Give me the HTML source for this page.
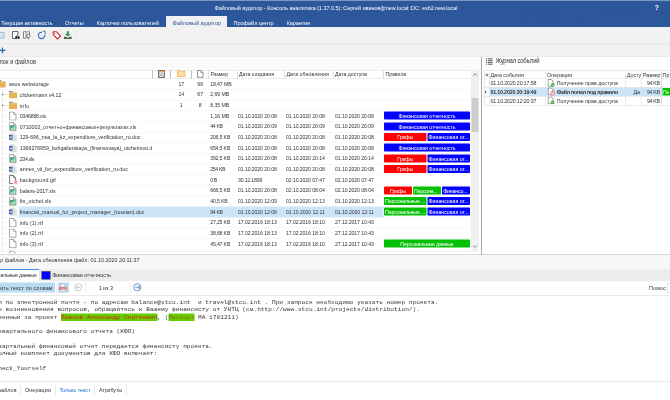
<!DOCTYPE html>
<html lang="ru"><head><meta charset="utf-8"><title>Файловый аудитор</title>
<style>
html,body{margin:0;padding:0;}
body{width:670px;height:400px;overflow:hidden;background:#fff;position:relative;font-family:"Liberation Sans",sans-serif;}
#app{position:absolute;left:0;top:0;width:1340px;height:800px;overflow:hidden;transform:scale(0.5);filter:blur(0.1px);transform-origin:0 0;}
#app div,#app span,#app svg{position:absolute;display:block;}
#app span{white-space:pre;}
</style></head><body><div id="app" style="position:absolute">
<div style="left:0px;top:0px;width:1340px;height:54px;background:rgba(41,85,153,0.99);"></div>
<div style="left:0px;top:0px;width:1340px;height:1.6px;background:rgba(126,152,197,0.99);"></div>
<svg style="left:1000px;top:1.6px" width="340" height="52.4" viewBox="0 0 170 26.2"><path d="M44.0 19.0 L38.5 28.5 L27.5 28.5 L22.0 19.0 L27.5 9.5 L38.5 9.5Z M61.6 14.0 L58.1 20.1 L51.1 20.1 L47.6 14.0 L51.1 7.9 L58.1 7.9Z M111.6 9.6 L109.1 13.9 L104.1 13.9 L101.6 9.6 L104.1 5.3 L109.1 5.3Z M136.0 6.3 L131.5 14.1 L122.5 14.1 L118.0 6.3 L122.5 -1.5 L131.5 -1.5Z M85.0 24.0 L82.5 28.3 L77.5 28.3 L75.0 24.0 L77.5 19.7 L82.5 19.7Z M53.0 4.0 L50.5 8.3 L45.5 8.3 L43.0 4.0 L45.5 -0.3 L50.5 -0.3Z" fill="none" stroke="#23498a" stroke-width="0.5" opacity="0.5"/></svg>
<span style="left:1309.32px;top:5.4px;font-size:14px;line-height:19.6px;color:#fff;font-weight:bold;transform:scaleY(1.12);">?</span>
<span style="left:429.4px;top:9.04px;font-size:10.8px;line-height:15.12px;color:#fff;letter-spacing:0.01px;transform:scaleY(1.12);">Файловый аудитор - Консоль аналитика (1.37.0.5)::Сергей иванов@new.local::DC: esb2.new.local</span>
<div style="left:332px;top:32px;width:122px;height:23px;background:rgba(243,243,243,0.99);"></div>
<span style="left:2.4px;top:37.7px;font-size:11px;line-height:15.4px;color:#fff;letter-spacing:-0.04px;transform:scaleY(1.12);">Текущая активность</span>
<span style="left:130px;top:37.7px;font-size:11px;line-height:15.4px;color:#fff;letter-spacing:-0.1px;transform:scaleY(1.12);">Отчеты</span>
<span style="left:193.4px;top:37.7px;font-size:11px;line-height:15.4px;color:#fff;letter-spacing:0px;transform:scaleY(1.12);">Карточки пользователей</span>
<span style="left:467px;top:37.7px;font-size:11px;line-height:15.4px;color:#fff;letter-spacing:-0.03px;transform:scaleY(1.12);">Профайл центр</span>
<span style="left:573.4px;top:37.7px;font-size:11px;line-height:15.4px;color:#fff;letter-spacing:-0.19px;transform:scaleY(1.12);">Карантин</span>
<span style="left:345px;top:37.7px;font-size:11px;line-height:15.4px;color:#34508a;letter-spacing:-0px;transform:scaleY(1.12);">Файловый аудитор</span>
<div style="left:0px;top:54px;width:1340px;height:33px;background:rgba(242,242,242,0.99);"></div>
<div style="left:0px;top:86.4px;width:1340px;height:1.2px;background:rgba(230,230,230,0.99);"></div>
<div style="left:0px;top:87.6px;width:1340px;height:25.4px;background:rgba(241,241,241,0.99);"></div>
<div style="left:0px;top:112.6px;width:1340px;height:1px;background:rgba(220,220,220,0.99);"></div>
<div style="left:16px;top:60px;width:1.2px;height:21px;background:rgba(226,226,226,0.99);"></div>
<div style="left:67px;top:60px;width:1.2px;height:21px;background:rgba(226,226,226,0.99);"></div>
<div style="left:98px;top:60px;width:1.2px;height:21px;background:rgba(226,226,226,0.99);"></div>
<div style="left:152px;top:60px;width:1.2px;height:21px;background:rgba(226,226,226,0.99);"></div>
<svg style="left:0px;top:62px" width="10" height="16" viewBox="0 0 5 8"><rect x="-3" y="1.5" width="7" height="5.5" fill="#dbe9f5" stroke="#7aa7d0" stroke-width="0.7"/></svg>
<svg style="left:22px;top:61px" width="20" height="20" viewBox="0 0 10 10"><path d="M1.5 1h5.5v3.5h-1v3.5h-4.5z" fill="#fff" stroke="#444" stroke-width="0.8"/><rect x="4.2" y="5.6" width="2" height="3" rx="0.8" fill="#333"/><rect x="6.6" y="5.6" width="2" height="3" rx="0.8" fill="#333"/></svg>
<svg style="left:44px;top:61px" width="20" height="20" viewBox="0 0 10 10"><path d="M1.5 1.2h2.5v6.5h-2.5z M5 1.2h2.5v3" fill="#fff" stroke="#555" stroke-width="0.7"/><circle cx="6.3" cy="5.3" r="1.7" fill="#fff" stroke="#444" stroke-width="0.7"/><path d="M6.3 7v1.8" stroke="#444" stroke-width="0.8"/></svg>
<svg style="left:73px;top:60px" width="20" height="20" viewBox="0 0 10 10"><path d="M5.4 2.25A3.2 3.2 0 1 0 8.2 4.9" fill="none" stroke="#2b6cb8" stroke-width="1.1"/><path d="M6 1.2h2.7v3.2" fill="none" stroke="#2b6cb8" stroke-width="0.9"/></svg>
<svg style="left:104px;top:61px" width="20" height="20" viewBox="0 0 10 10"><path d="M1.2 1.2h3l4.3 4.3-3 3-4.3-4.3z" fill="#fff" stroke="#d03020" stroke-width="1.1" stroke-linejoin="round"/><circle cx="2.8" cy="2.8" r="0.6" fill="#d03020"/></svg>
<svg style="left:126px;top:61px" width="20" height="20" viewBox="0 0 10 10"><path d="M3.7 0.8h2.2v2.6h1.7l-2.8 2.8-2.8-2.8h1.7z" fill="#2e9d57"/><path d="M1 6.3h2l1 1h1.6l1-1h2v2.2h-7.6z" fill="#555"/></svg>
<svg style="left:0px;top:92px" width="12" height="16" viewBox="0 0 6 8"><path d="M-0.5 4.3h5.9M2.5 1.4v5.8" stroke="#2b6cb8" stroke-width="1.25" fill="none"/></svg>
<div style="left:0px;top:113.6px;width:962.6px;height:26px;background:rgba(250,250,250,0.99);"></div>
<span style="left:-0.6px;top:115.96px;font-size:11.2px;line-height:15.68px;color:#333;letter-spacing:0.2px;transform:scaleY(1.12);">пок и файлов</span>
<div style="left:963.6px;top:113.6px;width:376.4px;height:396px;background:rgba(255,255,255,0.99);"></div>
<div style="left:962.4px;top:113.6px;width:1.2px;height:396px;background:rgba(167,167,167,0.99);"></div>
<div style="left:0px;top:139.6px;width:958px;height:1.2px;background:rgba(213,213,213,0.99);"></div>
<div style="left:0px;top:156.8px;width:942px;height:1.2px;background:rgba(217,217,217,0.99);"></div>
<div style="left:304.4px;top:140.8px;width:1.2px;height:16px;background:rgba(188,188,188,0.99);"></div>
<div style="left:340.4px;top:140.8px;width:1.2px;height:16px;background:rgba(188,188,188,0.99);"></div>
<div style="left:382.4px;top:140.8px;width:1.2px;height:16px;background:rgba(188,188,188,0.99);"></div>
<div style="left:417.2px;top:140.8px;width:1.2px;height:16px;background:rgba(188,188,188,0.99);"></div>
<div style="left:474px;top:140.8px;width:1.2px;height:16px;background:rgba(188,188,188,0.99);"></div>
<div style="left:569.2px;top:140.8px;width:1.2px;height:16px;background:rgba(188,188,188,0.99);"></div>
<div style="left:667.2px;top:140.8px;width:1.2px;height:16px;background:rgba(188,188,188,0.99);"></div>
<div style="left:767.2px;top:140.8px;width:1.2px;height:16px;background:rgba(188,188,188,0.99);"></div>
<span style="left:421px;top:142.12px;font-size:10.4px;line-height:14.56px;color:#333;letter-spacing:-0.12px;transform:scaleY(1.12);">Размер</span>
<span style="left:478px;top:142.12px;font-size:10.4px;line-height:14.56px;color:#333;letter-spacing:-0.04px;transform:scaleY(1.12);">Дата создания</span>
<span style="left:572.8px;top:142.12px;font-size:10.4px;line-height:14.56px;color:#333;letter-spacing:0.11px;transform:scaleY(1.12);">Дата обновления</span>
<span style="left:670px;top:142.12px;font-size:10.4px;line-height:14.56px;color:#333;letter-spacing:-0.04px;transform:scaleY(1.12);">Дата доступа</span>
<span style="left:771.2px;top:142.12px;font-size:10.4px;line-height:14.56px;color:#333;letter-spacing:-0.2px;transform:scaleY(1.12);">Правила</span>
<svg style="left:316.4px;top:140.4px" width="14.4" height="16" viewBox="0 0 7.2 8"><rect x="0.5" y="0.5" width="6" height="7" fill="#fff" stroke="#555" stroke-width="0.8"/><rect x="0.9" y="0.9" width="5.2" height="1.4" fill="#eea060"/><path d="M1.6 3.2l3.6 3.6M5.2 3.2l-3.6 3.6" stroke="#666" stroke-width="0.6"/><rect x="1.4" y="3" width="4.2" height="4" fill="none" stroke="#888" stroke-width="0.4"/></svg>
<svg style="left:353.6px;top:140.4px" width="17.2" height="14.4" viewBox="0 0 8.6 7.2"><path d="M0.5 0.6h3.2l0.8 1h3.6v5h-7.6z" fill="#fbdf9e" stroke="#f5a94e" stroke-width="0.8"/></svg>
<svg style="left:394.4px;top:140.4px" width="13.2" height="15.6" viewBox="0 0 6.6 7.8"><path d="M0.5 0.5h3.4l2.2 2.2v4.6h-5.6z" fill="#fff" stroke="#666" stroke-width="0.7"/><path d="M3.9 0.5v2.2h2.2" fill="none" stroke="#666" stroke-width="0.6"/></svg>
<svg style="left:-4.8px;top:160.35px" width="16.8" height="15.6" viewBox="0 0 8.4 7.8"><rect x="0" y="0.2" width="3.6" height="1.3" fill="#6a6a6a"/><rect x="0" y="1.1" width="8.2" height="1.2" fill="#dcc8a0"/><rect x="0" y="1.9" width="8.2" height="5.6" fill="#e9b259"/></svg>
<span style="left:18px;top:160.93px;font-size:10.6px;line-height:14.84px;color:#333;letter-spacing:-0.01px;transform:scaleY(1.12);">asus webstorage</span>
<span style="left:356.82px;top:161.07px;font-size:10.4px;line-height:14.56px;color:#333;transform:scaleY(1.12);">17</span>
<span style="left:394.62px;top:161.07px;font-size:10.4px;line-height:14.56px;color:#333;transform:scaleY(1.12);">96</span>
<span style="left:420.4px;top:161.07px;font-size:10.4px;line-height:14.56px;color:#333;letter-spacing:-0.24px;transform:scaleY(1.12);">18,47 MB</span>
<div style="left:0px;top:178.4px;width:942px;height:1px;background:rgba(241,241,241,0.99);"></div>
<svg style="left:18px;top:181.65px" width="16.8" height="15.6" viewBox="0 0 8.4 7.8"><rect x="0" y="0.2" width="3.6" height="1.3" fill="#6a6a6a"/><rect x="0" y="1.1" width="8.2" height="1.2" fill="#dcc8a0"/><rect x="0" y="1.9" width="8.2" height="5.6" fill="#e9b259"/></svg>
<svg style="left:3.2px;top:185.45px" width="6" height="8" viewBox="0 0 3 4"><path d="M0.6 0.6l1.5 1.4-1.5 1.4z" fill="#444"/></svg>
<div style="left:7.4px;top:189.05px;width:9.2px;height:0.9px;background:rgba(218,218,218,0.99);"></div>
<span style="left:39.6px;top:182.23px;font-size:10.6px;line-height:14.84px;color:#333;letter-spacing:-0.14px;transform:scaleY(1.12);">clickermann v4.12</span>
<span style="left:356.82px;top:182.37px;font-size:10.4px;line-height:14.56px;color:#333;transform:scaleY(1.12);">14</span>
<span style="left:394.62px;top:182.37px;font-size:10.4px;line-height:14.56px;color:#333;transform:scaleY(1.12);">67</span>
<span style="left:420.4px;top:182.37px;font-size:10.4px;line-height:14.56px;color:#333;letter-spacing:-0.1px;transform:scaleY(1.12);">2,69 MB</span>
<div style="left:0px;top:199.7px;width:942px;height:1px;background:rgba(241,241,241,0.99);"></div>
<svg style="left:18px;top:202.95px" width="16.8" height="15.6" viewBox="0 0 8.4 7.8"><rect x="0" y="0.2" width="3.6" height="1.3" fill="#6a6a6a"/><rect x="0" y="1.1" width="8.2" height="1.2" fill="#dcc8a0"/><rect x="0" y="1.9" width="8.2" height="5.6" fill="#e9b259"/></svg>
<svg style="left:3.2px;top:206.75px" width="6" height="8" viewBox="0 0 3 4"><path d="M0.6 0.6l1.5 1.4-1.5 1.4z" fill="#444"/></svg>
<div style="left:7.4px;top:210.35px;width:9.2px;height:0.9px;background:rgba(218,218,218,0.99);"></div>
<span style="left:39.6px;top:203.53px;font-size:10.6px;line-height:14.84px;color:#333;letter-spacing:0.53px;transform:scaleY(1.12);">info</span>
<span style="left:359.71px;top:203.67px;font-size:10.4px;line-height:14.56px;color:#333;transform:scaleY(1.12);">1</span>
<span style="left:397.51px;top:203.67px;font-size:10.4px;line-height:14.56px;color:#333;transform:scaleY(1.12);">8</span>
<span style="left:420.4px;top:203.67px;font-size:10.4px;line-height:14.56px;color:#333;letter-spacing:-0.1px;transform:scaleY(1.12);">8,35 MB</span>
<div style="left:0px;top:221px;width:942px;height:1px;background:rgba(241,241,241,0.99);"></div>
<svg style="left:18.2px;top:222.65px" width="18" height="18.8" viewBox="0 0 9 9.4"><path d="M0.6 0.5h4l2.4 2.4v5.8h-6.4z" fill="#fff" stroke="#7a7a7a" stroke-width="0.65"/><path d="M4.6 0.5v2.4h2.4" fill="none" stroke="#7a7a7a" stroke-width="0.55"/></svg>
<div style="left:5.4px;top:231.65px;width:10.4px;height:0.9px;background:rgba(228,228,228,0.99);"></div>
<span style="left:39.6px;top:224.83px;font-size:10.6px;line-height:14.84px;color:#333;letter-spacing:-0.45px;transform:scaleY(1.12);">0346868.xls</span>
<span style="left:420.4px;top:224.97px;font-size:10.4px;line-height:14.56px;color:#333;letter-spacing:-0.1px;transform:scaleY(1.12);">1,16 MB</span>
<span style="left:476px;top:224.97px;font-size:10.4px;line-height:14.56px;color:#333;letter-spacing:-0.22px;transform:scaleY(1.12);">01.10.2020 20:08</span>
<span style="left:572px;top:224.97px;font-size:10.4px;line-height:14.56px;color:#333;letter-spacing:-0.22px;transform:scaleY(1.12);">01.10.2020 20:08</span>
<span style="left:670px;top:224.97px;font-size:10.4px;line-height:14.56px;color:#333;letter-spacing:-0.22px;transform:scaleY(1.12);">01.10.2020 20:08</span>
<div style="left:768px;top:223.4px;width:172px;height:16px;background:rgba(0,0,255,0.99);border-radius:1.6px;"></div>
<span style="left:797px;top:224.58px;font-size:10.6px;line-height:14.84px;color:#fff;letter-spacing:-0.14px;transform:scaleY(1.12);">Финансовая отчетность</span>
<div style="left:0px;top:242.3px;width:942px;height:1px;background:rgba(241,241,241,0.99);"></div>
<svg style="left:18.2px;top:243.95px" width="18" height="18.8" viewBox="0 0 9 9.4"><path d="M0.6 0.5h4l2.4 2.4v5.8h-6.4z" fill="#fff" stroke="#7a7a7a" stroke-width="0.65"/><path d="M4.6 0.5v2.4h2.4" fill="none" stroke="#7a7a7a" stroke-width="0.55"/><rect x="0.9" y="3.4" width="5.8" height="5" fill="#62b184"/><path d="M1.2 3.9l1.3 1.2 1.8-2.3" stroke="#2a8a52" stroke-width="0.8" fill="none"/><path d="M2.2 8v-1.6M3.8 8v-2.4M5.4 8v-3.4" stroke="#eaf6ee" stroke-width="0.9"/></svg>
<div style="left:5.4px;top:252.95px;width:10.4px;height:0.9px;background:rgba(228,228,228,0.99);"></div>
<span style="left:39.6px;top:246.13px;font-size:10.6px;line-height:14.84px;color:#333;letter-spacing:-0.03px;transform:scaleY(1.12);">0710002_отчет+о+финансовых+результатах.xls</span>
<span style="left:420.4px;top:246.27px;font-size:10.4px;line-height:14.56px;color:#333;letter-spacing:-0.63px;transform:scaleY(1.12);">44 KB</span>
<span style="left:476px;top:246.27px;font-size:10.4px;line-height:14.56px;color:#333;letter-spacing:-0.22px;transform:scaleY(1.12);">01.10.2020 20:09</span>
<span style="left:572px;top:246.27px;font-size:10.4px;line-height:14.56px;color:#333;letter-spacing:-0.22px;transform:scaleY(1.12);">01.10.2020 20:09</span>
<span style="left:670px;top:246.27px;font-size:10.4px;line-height:14.56px;color:#333;letter-spacing:-0.22px;transform:scaleY(1.12);">01.10.2020 20:09</span>
<div style="left:768px;top:244.7px;width:172px;height:16px;background:rgba(0,0,255,0.99);border-radius:1.6px;"></div>
<span style="left:797px;top:245.88px;font-size:10.6px;line-height:14.84px;color:#fff;letter-spacing:-0.14px;transform:scaleY(1.12);">Финансовая отчетность</span>
<div style="left:0px;top:263.6px;width:942px;height:1px;background:rgba(241,241,241,0.99);"></div>
<svg style="left:18.2px;top:265.25px" width="18" height="18.8" viewBox="0 0 9 9.4"><path d="M1.6 0.4h4l2.2 2.2v6.2h-6.2z" fill="#dedede" stroke="#ececec" stroke-width="0.5"/><path d="M5.6 0.4v2.2h2.2z" fill="#f8f8f8"/><rect x="0" y="2.4" width="3.4" height="4.8" fill="#2b57a5"/><path d="M0.6 3.6l0.5 2.4 0.6-1.9 0.6 1.9 0.5-2.4" stroke="#fff" stroke-width="0.5" fill="none"/></svg>
<div style="left:5.4px;top:274.25px;width:10.4px;height:0.9px;background:rgba(228,228,228,0.99);"></div>
<span style="left:39.6px;top:267.43px;font-size:10.6px;line-height:14.84px;color:#333;letter-spacing:-0.09px;transform:scaleY(1.12);">129-696_nsa_la_kz_expenditure_verification_ru.doc</span>
<span style="left:420.4px;top:267.57px;font-size:10.4px;line-height:14.56px;color:#333;letter-spacing:-0.35px;transform:scaleY(1.12);">206,5 KB</span>
<span style="left:476px;top:267.57px;font-size:10.4px;line-height:14.56px;color:#333;letter-spacing:-0.22px;transform:scaleY(1.12);">01.10.2020 20:08</span>
<span style="left:572px;top:267.57px;font-size:10.4px;line-height:14.56px;color:#333;letter-spacing:-0.22px;transform:scaleY(1.12);">01.10.2020 20:08</span>
<span style="left:670px;top:267.57px;font-size:10.4px;line-height:14.56px;color:#333;letter-spacing:-0.22px;transform:scaleY(1.12);">01.10.2020 20:08</span>
<div style="left:768px;top:266px;width:84.8px;height:16px;background:rgba(255,0,0,0.99);border-radius:1.6px;"></div>
<span style="left:794.7px;top:267.18px;font-size:10.6px;line-height:14.84px;color:#fff;letter-spacing:-0.38px;transform:scaleY(1.12);">Грифы</span>
<div style="left:855.2px;top:266px;width:84.8px;height:16px;background:rgba(0,0,255,0.99);border-radius:1.6px;"></div>
<span style="left:857.2px;top:267.18px;font-size:10.6px;line-height:14.84px;color:#fff;letter-spacing:-0.07px;transform:scaleY(1.12);">Финансовая от...</span>
<div style="left:0px;top:284.9px;width:942px;height:1px;background:rgba(241,241,241,0.99);"></div>
<svg style="left:18.2px;top:286.55px" width="18" height="18.8" viewBox="0 0 9 9.4"><path d="M1.6 0.4h4l2.2 2.2v6.2h-6.2z" fill="#dedede" stroke="#ececec" stroke-width="0.5"/><path d="M5.6 0.4v2.2h2.2z" fill="#f8f8f8"/><rect x="0" y="2.4" width="3.4" height="4.8" fill="#2b57a5"/><path d="M0.6 3.6l0.5 2.4 0.6-1.9 0.6 1.9 0.5-2.4" stroke="#fff" stroke-width="0.5" fill="none"/></svg>
<div style="left:5.4px;top:295.55px;width:10.4px;height:0.9px;background:rgba(228,228,228,0.99);"></div>
<span style="left:39.6px;top:288.73px;font-size:10.6px;line-height:14.84px;color:#333;letter-spacing:-0.09px;transform:scaleY(1.12);width:264.4px;overflow:hidden;">1366276959_buhgalterskaya_(finansovaya)_otchetnost.d</span>
<span style="left:420.4px;top:288.87px;font-size:10.4px;line-height:14.56px;color:#333;letter-spacing:-0.35px;transform:scaleY(1.12);">654,5 KB</span>
<span style="left:476px;top:288.87px;font-size:10.4px;line-height:14.56px;color:#333;letter-spacing:-0.22px;transform:scaleY(1.12);">01.10.2020 20:08</span>
<span style="left:572px;top:288.87px;font-size:10.4px;line-height:14.56px;color:#333;letter-spacing:-0.22px;transform:scaleY(1.12);">01.10.2020 20:08</span>
<span style="left:670px;top:288.87px;font-size:10.4px;line-height:14.56px;color:#333;letter-spacing:-0.22px;transform:scaleY(1.12);">01.10.2020 20:08</span>
<div style="left:768px;top:287.3px;width:172px;height:16px;background:rgba(0,0,255,0.99);border-radius:1.6px;"></div>
<span style="left:797px;top:288.48px;font-size:10.6px;line-height:14.84px;color:#fff;letter-spacing:-0.14px;transform:scaleY(1.12);">Финансовая отчетность</span>
<div style="left:0px;top:306.2px;width:942px;height:1px;background:rgba(241,241,241,0.99);"></div>
<svg style="left:18.2px;top:307.85px" width="18" height="18.8" viewBox="0 0 9 9.4"><path d="M0.6 0.5h4l2.4 2.4v5.8h-6.4z" fill="#fff" stroke="#7a7a7a" stroke-width="0.65"/><path d="M4.6 0.5v2.4h2.4" fill="none" stroke="#7a7a7a" stroke-width="0.55"/><rect x="0.9" y="3.4" width="5.8" height="5" fill="#62b184"/><path d="M1.2 3.9l1.3 1.2 1.8-2.3" stroke="#2a8a52" stroke-width="0.8" fill="none"/><path d="M2.2 8v-1.6M3.8 8v-2.4M5.4 8v-3.4" stroke="#eaf6ee" stroke-width="0.9"/></svg>
<div style="left:5.4px;top:316.85px;width:10.4px;height:0.9px;background:rgba(228,228,228,0.99);"></div>
<span style="left:39.6px;top:310.03px;font-size:10.6px;line-height:14.84px;color:#333;letter-spacing:-0.74px;transform:scaleY(1.12);">234.xls</span>
<span style="left:420.4px;top:310.17px;font-size:10.4px;line-height:14.56px;color:#333;letter-spacing:-0.35px;transform:scaleY(1.12);">392,5 KB</span>
<span style="left:476px;top:310.17px;font-size:10.4px;line-height:14.56px;color:#333;letter-spacing:-0.22px;transform:scaleY(1.12);">01.10.2020 20:08</span>
<span style="left:572px;top:310.17px;font-size:10.4px;line-height:14.56px;color:#333;letter-spacing:-0.22px;transform:scaleY(1.12);">01.10.2020 20:14</span>
<span style="left:670px;top:310.17px;font-size:10.4px;line-height:14.56px;color:#333;letter-spacing:-0.22px;transform:scaleY(1.12);">01.10.2020 20:14</span>
<div style="left:768px;top:308.6px;width:84.8px;height:16px;background:rgba(255,0,0,0.99);border-radius:1.6px;"></div>
<span style="left:794.7px;top:309.78px;font-size:10.6px;line-height:14.84px;color:#fff;letter-spacing:-0.38px;transform:scaleY(1.12);">Грифы</span>
<div style="left:855.2px;top:308.6px;width:84.8px;height:16px;background:rgba(0,0,255,0.99);border-radius:1.6px;"></div>
<span style="left:857.2px;top:309.78px;font-size:10.6px;line-height:14.84px;color:#fff;letter-spacing:-0.07px;transform:scaleY(1.12);">Финансовая от...</span>
<div style="left:0px;top:327.5px;width:942px;height:1px;background:rgba(241,241,241,0.99);"></div>
<svg style="left:18.2px;top:329.15px" width="18" height="18.8" viewBox="0 0 9 9.4"><path d="M1.6 0.4h4l2.2 2.2v6.2h-6.2z" fill="#dedede" stroke="#ececec" stroke-width="0.5"/><path d="M5.6 0.4v2.2h2.2z" fill="#f8f8f8"/><rect x="0" y="2.4" width="3.4" height="4.8" fill="#2b57a5"/><path d="M0.6 3.6l0.5 2.4 0.6-1.9 0.6 1.9 0.5-2.4" stroke="#fff" stroke-width="0.5" fill="none"/></svg>
<div style="left:5.4px;top:338.15px;width:10.4px;height:0.9px;background:rgba(228,228,228,0.99);"></div>
<span style="left:39.6px;top:331.33px;font-size:10.6px;line-height:14.84px;color:#333;letter-spacing:0px;transform:scaleY(1.12);">annex_vii_for_expenditure_verification_ru.doc</span>
<span style="left:420.4px;top:331.47px;font-size:10.4px;line-height:14.56px;color:#333;letter-spacing:-0.69px;transform:scaleY(1.12);">254 KB</span>
<span style="left:476px;top:331.47px;font-size:10.4px;line-height:14.56px;color:#333;letter-spacing:-0.22px;transform:scaleY(1.12);">01.10.2020 20:08</span>
<span style="left:572px;top:331.47px;font-size:10.4px;line-height:14.56px;color:#333;letter-spacing:-0.22px;transform:scaleY(1.12);">01.10.2020 20:08</span>
<span style="left:670px;top:331.47px;font-size:10.4px;line-height:14.56px;color:#333;letter-spacing:-0.22px;transform:scaleY(1.12);">01.10.2020 20:08</span>
<div style="left:768px;top:329.9px;width:84.8px;height:16px;background:rgba(255,0,0,0.99);border-radius:1.6px;"></div>
<span style="left:794.7px;top:331.08px;font-size:10.6px;line-height:14.84px;color:#fff;letter-spacing:-0.38px;transform:scaleY(1.12);">Грифы</span>
<div style="left:855.2px;top:329.9px;width:84.8px;height:16px;background:rgba(0,0,255,0.99);border-radius:1.6px;"></div>
<span style="left:857.2px;top:331.08px;font-size:10.6px;line-height:14.84px;color:#fff;letter-spacing:-0.07px;transform:scaleY(1.12);">Финансовая от...</span>
<div style="left:0px;top:348.8px;width:942px;height:1px;background:rgba(241,241,241,0.99);"></div>
<svg style="left:18.2px;top:350.45px" width="18" height="18.8" viewBox="0 0 9 9.4"><path d="M0.6 0.5h3.8l2.2 2.2v3M4 8.7h-3.4v-8.2" fill="#fff" stroke="#3a3a3a" stroke-width="0.7"/><path d="M4.4 0.5v2.2h2.2" fill="none" stroke="#3a3a3a" stroke-width="0.6"/><path d="M5 5.6l3.4 3.4M8.4 5.6l-3.4 3.4" stroke="#f04550" stroke-width="0.9"/></svg>
<div style="left:5.4px;top:359.45px;width:10.4px;height:0.9px;background:rgba(228,228,228,0.99);"></div>
<span style="left:39.6px;top:352.63px;font-size:10.6px;line-height:14.84px;color:#333;letter-spacing:0.2px;transform:scaleY(1.12);">background.gif</span>
<span style="left:420.4px;top:352.77px;font-size:10.4px;line-height:14.56px;color:#333;letter-spacing:-0.87px;transform:scaleY(1.12);">0 B</span>
<span style="left:476px;top:352.77px;font-size:10.4px;line-height:14.56px;color:#333;letter-spacing:-0.37px;transform:scaleY(1.12);">30.12.1899</span>
<span style="left:572px;top:352.77px;font-size:10.4px;line-height:14.56px;color:#333;letter-spacing:-0.22px;transform:scaleY(1.12);">02.10.2020 07:47</span>
<span style="left:670px;top:352.77px;font-size:10.4px;line-height:14.56px;color:#333;letter-spacing:-0.22px;transform:scaleY(1.12);">02.10.2020 07:47</span>
<div style="left:0px;top:370.1px;width:942px;height:1px;background:rgba(241,241,241,0.99);"></div>
<svg style="left:18.2px;top:371.75px" width="18" height="18.8" viewBox="0 0 9 9.4"><path d="M0.6 0.5h4l2.4 2.4v5.8h-6.4z" fill="#fff" stroke="#7a7a7a" stroke-width="0.65"/><path d="M4.6 0.5v2.4h2.4" fill="none" stroke="#7a7a7a" stroke-width="0.55"/><rect x="0.9" y="3.4" width="5.8" height="5" fill="#62b184"/><path d="M1.2 3.9l1.3 1.2 1.8-2.3" stroke="#2a8a52" stroke-width="0.8" fill="none"/><path d="M2.2 8v-1.6M3.8 8v-2.4M5.4 8v-3.4" stroke="#eaf6ee" stroke-width="0.9"/></svg>
<div style="left:5.4px;top:380.75px;width:10.4px;height:0.9px;background:rgba(228,228,228,0.99);"></div>
<span style="left:39.6px;top:373.93px;font-size:10.6px;line-height:14.84px;color:#333;letter-spacing:-0.18px;transform:scaleY(1.12);">balans-2017.xls</span>
<span style="left:420.4px;top:374.07px;font-size:10.4px;line-height:14.56px;color:#333;letter-spacing:-0.35px;transform:scaleY(1.12);">666,5 KB</span>
<span style="left:476px;top:374.07px;font-size:10.4px;line-height:14.56px;color:#333;letter-spacing:-0.22px;transform:scaleY(1.12);">01.10.2020 20:08</span>
<span style="left:572px;top:374.07px;font-size:10.4px;line-height:14.56px;color:#333;letter-spacing:-0.22px;transform:scaleY(1.12);">02.10.2020 08:04</span>
<span style="left:670px;top:374.07px;font-size:10.4px;line-height:14.56px;color:#333;letter-spacing:-0.22px;transform:scaleY(1.12);">02.10.2020 08:04</span>
<div style="left:768px;top:372.5px;width:55.73px;height:16px;background:rgba(255,0,0,0.99);border-radius:1.6px;"></div>
<span style="left:780.17px;top:373.68px;font-size:10.6px;line-height:14.84px;color:#fff;letter-spacing:-0.38px;transform:scaleY(1.12);">Грифы</span>
<div style="left:826.13px;top:372.5px;width:55.73px;height:16px;background:rgba(0,191,0,0.99);border-radius:1.6px;"></div>
<span style="left:828.13px;top:373.68px;font-size:10.6px;line-height:14.84px;color:#fff;letter-spacing:-0.59px;transform:scaleY(1.12);">Персона...</span>
<div style="left:884.27px;top:372.5px;width:55.73px;height:16px;background:rgba(0,0,255,0.99);border-radius:1.6px;"></div>
<span style="left:886.27px;top:373.68px;font-size:10.6px;line-height:14.84px;color:#fff;letter-spacing:-0.37px;transform:scaleY(1.12);">Финансо...</span>
<div style="left:0px;top:391.4px;width:942px;height:1px;background:rgba(241,241,241,0.99);"></div>
<svg style="left:18.2px;top:393.05px" width="18" height="18.8" viewBox="0 0 9 9.4"><path d="M0.6 0.5h4l2.4 2.4v5.8h-6.4z" fill="#fff" stroke="#7a7a7a" stroke-width="0.65"/><path d="M4.6 0.5v2.4h2.4" fill="none" stroke="#7a7a7a" stroke-width="0.55"/><rect x="0.9" y="3.4" width="5.8" height="5" fill="#62b184"/><path d="M1.2 3.9l1.3 1.2 1.8-2.3" stroke="#2a8a52" stroke-width="0.8" fill="none"/><path d="M2.2 8v-1.6M3.8 8v-2.4M5.4 8v-3.4" stroke="#eaf6ee" stroke-width="0.9"/></svg>
<div style="left:5.4px;top:402.05px;width:10.4px;height:0.9px;background:rgba(228,228,228,0.99);"></div>
<span style="left:39.6px;top:395.23px;font-size:10.6px;line-height:14.84px;color:#333;letter-spacing:0.08px;transform:scaleY(1.12);">fin_otchet.xls</span>
<span style="left:420.4px;top:395.37px;font-size:10.4px;line-height:14.56px;color:#333;letter-spacing:-0.29px;transform:scaleY(1.12);">40,5 KB</span>
<span style="left:476px;top:395.37px;font-size:10.4px;line-height:14.56px;color:#333;letter-spacing:-0.22px;transform:scaleY(1.12);">01.10.2020 12:09</span>
<span style="left:572px;top:395.37px;font-size:10.4px;line-height:14.56px;color:#333;letter-spacing:-0.22px;transform:scaleY(1.12);">01.10.2020 12:13</span>
<span style="left:670px;top:395.37px;font-size:10.4px;line-height:14.56px;color:#333;letter-spacing:-0.22px;transform:scaleY(1.12);">01.10.2020 12:13</span>
<div style="left:768px;top:393.8px;width:84.8px;height:16px;background:rgba(0,191,0,0.99);border-radius:1.6px;"></div>
<span style="left:770px;top:394.98px;font-size:10.6px;line-height:14.84px;color:#fff;letter-spacing:-0.33px;transform:scaleY(1.12);">Персональные ...</span>
<div style="left:855.2px;top:393.8px;width:84.8px;height:16px;background:rgba(0,0,255,0.99);border-radius:1.6px;"></div>
<span style="left:857.2px;top:394.98px;font-size:10.6px;line-height:14.84px;color:#fff;letter-spacing:-0.07px;transform:scaleY(1.12);">Финансовая от...</span>
<div style="left:38px;top:413.3px;width:729.2px;height:21.3px;background:rgba(203,228,247,0.99);"></div>
<div style="left:0px;top:412.7px;width:942px;height:1px;background:rgba(241,241,241,0.99);"></div>
<svg style="left:18.2px;top:414.35px" width="18" height="18.8" viewBox="0 0 9 9.4"><path d="M1.6 0.4h4l2.2 2.2v6.2h-6.2z" fill="#dedede" stroke="#ececec" stroke-width="0.5"/><path d="M5.6 0.4v2.2h2.2z" fill="#f8f8f8"/><rect x="0" y="2.4" width="3.4" height="4.8" fill="#2b57a5"/><path d="M0.6 3.6l0.5 2.4 0.6-1.9 0.6 1.9 0.5-2.4" stroke="#fff" stroke-width="0.5" fill="none"/></svg>
<div style="left:5.4px;top:423.35px;width:10.4px;height:0.9px;background:rgba(228,228,228,0.99);"></div>
<span style="left:39.6px;top:416.53px;font-size:10.6px;line-height:14.84px;color:#333;letter-spacing:-0.02px;transform:scaleY(1.12);">financial_manual_for_project_manager_(russian).doc</span>
<span style="left:420.4px;top:416.67px;font-size:10.4px;line-height:14.56px;color:#333;letter-spacing:-0.63px;transform:scaleY(1.12);">94 KB</span>
<span style="left:476px;top:416.67px;font-size:10.4px;line-height:14.56px;color:#333;letter-spacing:-0.22px;transform:scaleY(1.12);">01.10.2020 12:08</span>
<span style="left:572px;top:416.67px;font-size:10.4px;line-height:14.56px;color:#333;letter-spacing:-0.17px;transform:scaleY(1.12);">01.10.2020 12:11</span>
<span style="left:670px;top:416.67px;font-size:10.4px;line-height:14.56px;color:#333;letter-spacing:-0.17px;transform:scaleY(1.12);">01.10.2020 12:11</span>
<div style="left:768px;top:415.1px;width:84.8px;height:16px;background:rgba(0,191,0,0.99);border-radius:1.6px;"></div>
<span style="left:770px;top:416.28px;font-size:10.6px;line-height:14.84px;color:#fff;letter-spacing:-0.33px;transform:scaleY(1.12);">Персональные ...</span>
<div style="left:855.2px;top:415.1px;width:84.8px;height:16px;background:rgba(0,0,255,0.99);border-radius:1.6px;"></div>
<span style="left:857.2px;top:416.28px;font-size:10.6px;line-height:14.84px;color:#fff;letter-spacing:-0.07px;transform:scaleY(1.12);">Финансовая от...</span>
<div style="left:0px;top:434px;width:942px;height:1px;background:rgba(241,241,241,0.99);"></div>
<svg style="left:18.2px;top:435.65px" width="18" height="18.8" viewBox="0 0 9 9.4"><path d="M0.6 0.5h4l2.4 2.4v5.8h-6.4z" fill="#fff" stroke="#7a7a7a" stroke-width="0.65"/><path d="M4.6 0.5v2.4h2.4" fill="none" stroke="#7a7a7a" stroke-width="0.55"/></svg>
<div style="left:5.4px;top:444.65px;width:10.4px;height:0.9px;background:rgba(228,228,228,0.99);"></div>
<span style="left:39.6px;top:437.83px;font-size:10.6px;line-height:14.84px;color:#333;letter-spacing:0.09px;transform:scaleY(1.12);">info (1).rtf</span>
<span style="left:420.4px;top:437.97px;font-size:10.4px;line-height:14.56px;color:#333;letter-spacing:-0.35px;transform:scaleY(1.12);">27,25 KB</span>
<span style="left:476px;top:437.97px;font-size:10.4px;line-height:14.56px;color:#333;letter-spacing:-0.22px;transform:scaleY(1.12);">17.02.2016 18:13</span>
<span style="left:572px;top:437.97px;font-size:10.4px;line-height:14.56px;color:#333;letter-spacing:-0.22px;transform:scaleY(1.12);">17.02.2016 18:10</span>
<span style="left:670px;top:437.97px;font-size:10.4px;line-height:14.56px;color:#333;letter-spacing:-0.22px;transform:scaleY(1.12);">27.12.2017 10:43</span>
<div style="left:0px;top:455.3px;width:942px;height:1px;background:rgba(241,241,241,0.99);"></div>
<svg style="left:18.2px;top:456.95px" width="18" height="18.8" viewBox="0 0 9 9.4"><path d="M0.6 0.5h4l2.4 2.4v5.8h-6.4z" fill="#fff" stroke="#7a7a7a" stroke-width="0.65"/><path d="M4.6 0.5v2.4h2.4" fill="none" stroke="#7a7a7a" stroke-width="0.55"/></svg>
<div style="left:5.4px;top:465.95px;width:10.4px;height:0.9px;background:rgba(228,228,228,0.99);"></div>
<span style="left:39.6px;top:459.13px;font-size:10.6px;line-height:14.84px;color:#333;letter-spacing:0.09px;transform:scaleY(1.12);">info (2).rtf</span>
<span style="left:420.4px;top:459.27px;font-size:10.4px;line-height:14.56px;color:#333;letter-spacing:-0.35px;transform:scaleY(1.12);">38,68 KB</span>
<span style="left:476px;top:459.27px;font-size:10.4px;line-height:14.56px;color:#333;letter-spacing:-0.22px;transform:scaleY(1.12);">17.02.2016 18:13</span>
<span style="left:572px;top:459.27px;font-size:10.4px;line-height:14.56px;color:#333;letter-spacing:-0.22px;transform:scaleY(1.12);">17.02.2016 18:10</span>
<span style="left:670px;top:459.27px;font-size:10.4px;line-height:14.56px;color:#333;letter-spacing:-0.22px;transform:scaleY(1.12);">27.12.2017 10:43</span>
<div style="left:0px;top:476.6px;width:942px;height:1px;background:rgba(241,241,241,0.99);"></div>
<svg style="left:18.2px;top:478.25px" width="18" height="18.8" viewBox="0 0 9 9.4"><path d="M0.6 0.5h4l2.4 2.4v5.8h-6.4z" fill="#fff" stroke="#7a7a7a" stroke-width="0.65"/><path d="M4.6 0.5v2.4h2.4" fill="none" stroke="#7a7a7a" stroke-width="0.55"/></svg>
<div style="left:5.4px;top:487.25px;width:10.4px;height:0.9px;background:rgba(228,228,228,0.99);"></div>
<span style="left:39.6px;top:480.43px;font-size:10.6px;line-height:14.84px;color:#333;letter-spacing:0.09px;transform:scaleY(1.12);">info (3).rtf</span>
<span style="left:420.4px;top:480.57px;font-size:10.4px;line-height:14.56px;color:#333;letter-spacing:-0.35px;transform:scaleY(1.12);">45,47 KB</span>
<span style="left:476px;top:480.57px;font-size:10.4px;line-height:14.56px;color:#333;letter-spacing:-0.22px;transform:scaleY(1.12);">17.02.2016 18:13</span>
<span style="left:572px;top:480.57px;font-size:10.4px;line-height:14.56px;color:#333;letter-spacing:-0.22px;transform:scaleY(1.12);">17.02.2016 18:10</span>
<span style="left:670px;top:480.57px;font-size:10.4px;line-height:14.56px;color:#333;letter-spacing:-0.22px;transform:scaleY(1.12);">27.12.2017 10:43</span>
<div style="left:768px;top:479px;width:172px;height:16px;background:rgba(0,191,0,0.99);border-radius:1.6px;"></div>
<span style="left:800.7px;top:480.18px;font-size:10.6px;line-height:14.84px;color:#fff;letter-spacing:-0.38px;transform:scaleY(1.12);">Персональные данные</span>
<div style="left:0px;top:497.9px;width:942px;height:1px;background:rgba(236,236,236,0.99);"></div>
<svg style="left:18px;top:500.9px" width="16" height="6" viewBox="0 0 8 3"><path d="M0.7 3v-2.5h3.6l2 2v0.5" fill="#fff" stroke="#555" stroke-width="0.7"/></svg>
<div style="left:4.9px;top:179px;width:1px;height:325.5px;background:rgba(220,220,220,0.99);"></div>
<div style="left:942px;top:140.8px;width:16px;height:362px;background:rgba(240,240,240,0.99);"></div>
<div style="left:942.6px;top:196px;width:14.8px;height:68px;background:rgba(204,204,204,0.99);"></div>
<svg style="left:945px;top:145px" width="10" height="8" viewBox="0 0 5 4"><path d="M0.8 3l1.7-1.8 1.7 1.8" fill="none" stroke="#555" stroke-width="0.7"/></svg>
<svg style="left:945px;top:489px" width="10" height="8" viewBox="0 0 5 4"><path d="M0.8 1l1.7 1.8 1.7-1.8" fill="none" stroke="#555" stroke-width="0.7"/></svg>
<div style="left:0px;top:502.4px;width:942px;height:1px;background:rgba(230,230,230,0.99);"></div>
<svg style="left:972px;top:116px" width="14" height="14" viewBox="0 0 7 7"><path d="M0 0.8h1.2M2 0.8h4.6M0 2.6h1.2M2 2.6h4.6M0 4.4h1.2M2 4.4h4.6M0 6.2h1.2M2 6.2h4.6" stroke="#444" stroke-width="0.9"/></svg>
<span style="left:990.8px;top:114.4px;font-size:12px;line-height:16.8px;color:#333;letter-spacing:-0.45px;transform:scaleY(1.12);">Журнал событий</span>
<div style="left:967.6px;top:140.6px;width:372.4px;height:1.2px;background:rgba(213,213,213,0.99);"></div>
<div style="left:967.6px;top:140.6px;width:1.2px;height:70px;background:rgba(213,213,213,0.99);"></div>
<div style="left:979px;top:141.8px;width:1.2px;height:68.8px;background:rgba(217,217,217,0.99);"></div>
<div style="left:1090.8px;top:141.8px;width:1.2px;height:68.8px;background:rgba(217,217,217,0.99);"></div>
<div style="left:1250.6px;top:141.8px;width:1.2px;height:68.8px;background:rgba(217,217,217,0.99);"></div>
<div style="left:1283.2px;top:141.8px;width:1.2px;height:68.8px;background:rgba(217,217,217,0.99);"></div>
<div style="left:1322.4px;top:141.8px;width:1.2px;height:68.8px;background:rgba(217,217,217,0.99);"></div>
<div style="left:979px;top:174.6px;width:344px;height:17.6px;background:rgba(203,228,247,0.99);"></div>
<div style="left:967.6px;top:157px;width:372.4px;height:1.2px;background:rgba(220,220,220,0.99);"></div>
<div style="left:967.6px;top:174.6px;width:372.4px;height:1.2px;background:rgba(220,220,220,0.99);"></div>
<div style="left:967.6px;top:192.2px;width:372.4px;height:1.2px;background:rgba(220,220,220,0.99);"></div>
<div style="left:967.6px;top:209.8px;width:372.4px;height:1.2px;background:rgba(220,220,220,0.99);"></div>
<span style="left:980.8px;top:141.98px;font-size:10.6px;line-height:14.84px;color:#333;letter-spacing:-0.09px;transform:scaleY(1.12);">Дата события</span>
<span style="left:1094px;top:141.98px;font-size:10.6px;line-height:14.84px;color:#333;letter-spacing:0.15px;transform:scaleY(1.12);">Операции</span>
<span style="left:1253.4px;top:141.98px;font-size:10.6px;line-height:14.84px;color:#333;letter-spacing:0.09px;transform:scaleY(1.12);">Досту</span>
<span style="left:1286px;top:141.98px;font-size:10.6px;line-height:14.84px;color:#333;letter-spacing:-0.27px;transform:scaleY(1.12);">Размер</span>
<span style="left:1325.2px;top:141.98px;font-size:10.6px;line-height:14.84px;color:#333;transform:scaleY(1.12);">Пр</span>
<svg style="left:970px;top:146px" width="8" height="8" viewBox="0 0 4 4"><path d="M2 0.3v3.4M0.3 2h3.4M0.8 0.8l2.4 2.4M3.2 0.8l-2.4 2.4" stroke="#666" stroke-width="0.5"/></svg>
<span style="left:980.8px;top:158.58px;font-size:10.6px;line-height:14.84px;color:#333;letter-spacing:-0.28px;transform:scaleY(1.12);">01.10.2020 20:17:58</span>
<svg style="left:1095px;top:157.8px" width="16" height="16" viewBox="0 0 8 8"><path d="M0.6 0.5h3.2l1.8 1.8v5h-5z" fill="#fff" stroke="#555" stroke-width="0.6"/><circle cx="5.2" cy="5.8" r="1.9" fill="#3cb04c"/><path d="M4.3 5.8l0.7 0.7 1.2-1.3" stroke="#fff" stroke-width="0.5" fill="none"/></svg>
<span style="left:1113.4px;top:158.58px;font-size:10.6px;line-height:14.84px;color:#333;letter-spacing:0.01px;transform:scaleY(1.12);">Получение прав доступа</span>
<span style="left:1294px;top:158.58px;font-size:10.6px;line-height:14.84px;color:#333;letter-spacing:-0.74px;transform:scaleY(1.12);">94 KB</span>
<span style="left:980.8px;top:176.18px;font-size:10.6px;line-height:14.84px;color:#333;letter-spacing:-0.34px;font-weight:bold;transform:scaleY(1.12);">01.10.2020 20:19:49</span>
<svg style="left:1095px;top:175.4px" width="16" height="16" viewBox="0 0 8 8"><path d="M0.6 0.5h3.2l1.8 1.8v5h-5z" fill="#fff" stroke="#555" stroke-width="0.6"/><circle cx="5.2" cy="5.8" r="1.9" fill="#fff" stroke="#e04040" stroke-width="0.7"/><path d="M5.2 4.8v1.2M5.2 6.6v0.4" stroke="#e04040" stroke-width="0.6"/></svg>
<span style="left:1113.4px;top:176.18px;font-size:10.6px;line-height:14.84px;color:#333;letter-spacing:-0.49px;font-weight:bold;transform:scaleY(1.12);">Файл попал под правило</span>
<span style="left:1266.8px;top:176.18px;font-size:10.6px;line-height:14.84px;color:#333;letter-spacing:0.06px;transform:scaleY(1.12);">Да</span>
<span style="left:1294px;top:176.18px;font-size:10.6px;line-height:14.84px;color:#333;letter-spacing:-0.74px;transform:scaleY(1.12);">94 KB</span>
<span style="left:980.8px;top:193.78px;font-size:10.6px;line-height:14.84px;color:#333;letter-spacing:-0.28px;transform:scaleY(1.12);">01.10.2020 12:20:37</span>
<svg style="left:1095px;top:193px" width="16" height="16" viewBox="0 0 8 8"><path d="M0.6 0.5h3.2l1.8 1.8v5h-5z" fill="#fff" stroke="#555" stroke-width="0.6"/><circle cx="5.2" cy="5.8" r="1.9" fill="#3cb04c"/><path d="M4.3 5.8l0.7 0.7 1.2-1.3" stroke="#fff" stroke-width="0.5" fill="none"/></svg>
<span style="left:1113.4px;top:193.78px;font-size:10.6px;line-height:14.84px;color:#333;letter-spacing:0.01px;transform:scaleY(1.12);">Получение прав доступа</span>
<span style="left:1294px;top:193.78px;font-size:10.6px;line-height:14.84px;color:#333;letter-spacing:-0.74px;transform:scaleY(1.12);">94 KB</span>
<svg style="left:969px;top:179.8px" width="6" height="8" viewBox="0 0 3 4"><path d="M0.6 0.4l1.6 1.6-1.6 1.6z" fill="#444"/></svg>
<div style="left:1324.8px;top:176.4px;width:16px;height:14.4px;background:rgba(0,191,0,0.99);"></div>
<span style="left:1326px;top:177.2px;font-size:10px;line-height:14px;color:#fff;transform:scaleY(1.12);">Пе</span>
<div style="left:0px;top:508.8px;width:1340px;height:1.2px;background:rgba(179,179,179,0.99);"></div>
<div style="left:0px;top:510px;width:1340px;height:28px;background:rgba(247,247,247,0.99);"></div>
<span style="left:0.4px;top:511.84px;font-size:10.8px;line-height:15.12px;color:#333;letter-spacing:0px;transform:scaleY(1.12);">р файлов - Дата обновления файл: 01.10.2020 20:11:37</span>
<div style="left:0px;top:538px;width:1340px;height:24.6px;background:rgba(237,237,237,0.99);"></div>
<div style="left:0px;top:538px;width:78px;height:25px;background:rgba(255,255,255,0.99);"></div>
<div style="left:0px;top:538.4px;width:78.4px;height:1.8px;background:rgba(59,142,232,0.99);"></div>
<div style="left:78px;top:538px;width:1px;height:24.6px;background:rgba(216,216,216,0.99);"></div>
<span style="left:0.4px;top:543.44px;font-size:10.8px;line-height:15.12px;color:#333;letter-spacing:-0.44px;transform:scaleY(1.12);">альные данные</span>
<div style="left:84.4px;top:542.8px;width:15.6px;height:15.6px;background:rgba(0,0,255,0.99);outline:1px solid #223;"></div>
<span style="left:104.4px;top:543.3px;font-size:11px;line-height:15.4px;color:#333;letter-spacing:-0.16px;transform:scaleY(1.12);">Финансовая отчетность</span>
<div style="left:0px;top:562.6px;width:1340px;height:27px;background:rgba(255,255,255,0.99);"></div>
<div style="left:0px;top:564.8px;width:110px;height:20.4px;background:rgba(184,218,243,0.99);"></div>
<span style="left:0.4px;top:569.04px;font-size:10.8px;line-height:15.12px;color:#333;letter-spacing:0.24px;transform:scaleY(1.12);">ить текст по словам</span>
<div style="left:112px;top:566px;width:1px;height:20.4px;background:rgba(221,221,221,0.99);"></div>
<div style="left:116.2px;top:564.8px;width:21.8px;height:20.4px;background:rgba(184,218,243,0.99);"></div>
<svg style="left:117.2px;top:566px" width="18" height="18" viewBox="0 0 9 9"><path d="M2.2 0.7h2.8l1.6 1.4v2.4h-4.4z" fill="#f4f4f4" stroke="#999" stroke-width="0.5"/><rect x="0.5" y="4.2" width="7.9" height="2.5" rx="0.5" fill="#e2665c"/><rect x="2" y="5" width="4.9" height="0.6" fill="#f6c0ba"/><rect x="1.9" y="6.7" width="5.1" height="1.5" fill="#eee" stroke="#aaa" stroke-width="0.4"/></svg>
<svg style="left:148px;top:566px" width="17.2" height="17.2" viewBox="0 0 8.6 8.6"><circle cx="4.3" cy="4.3" r="3.6" fill="#fff" stroke="#a8a8a8" stroke-width="0.6"/><path d="M6.3 4.3h-3.8M3.9 2.8l-1.5 1.5 1.5 1.5" stroke="#a8a8a8" stroke-width="0.6" fill="none"/></svg>
<div style="left:171px;top:566px;width:1px;height:20.4px;background:rgba(221,221,221,0.99);"></div>
<span style="left:197.4px;top:569.04px;font-size:10.8px;line-height:15.12px;color:#333;letter-spacing:-0.1px;transform:scaleY(1.12);">1 из 3</span>
<div style="left:261.2px;top:566px;width:1px;height:20.4px;background:rgba(221,221,221,0.99);"></div>
<svg style="left:266px;top:566px" width="17.2" height="17.2" viewBox="0 0 8.6 8.6"><circle cx="4.3" cy="4.3" r="3.6" fill="#fff" stroke="#2b6cb8" stroke-width="0.7"/><path d="M2 4.3h3.8M4.4 2.8l1.5 1.5-1.5 1.5M6.6 2.7v3.2" stroke="#2b6cb8" stroke-width="0.6" fill="none"/></svg>
<span style="left:1298px;top:569.04px;font-size:10.8px;line-height:15.12px;color:#333;letter-spacing:0.28px;transform:scaleY(1.12);">Помос</span>
<div style="left:1335px;top:567px;width:6px;height:18px;background:rgba(255,255,255,0.99);outline:1px solid #ccc;"></div>
<div style="left:0px;top:590px;width:1340px;height:1.2px;background:rgba(213,213,213,0.99);"></div>
<span style="left:-3.6px;top:596.17px;font-size:12.33px;line-height:17.26px;color:#383838;font-family:'Liberation Mono',monospace;">и по электронной почте - по адресам balance@stcu.int  и travel@stcu.int . При запросе необходимо указать номер проекта.</span>
<span style="left:-3.6px;top:610.89px;font-size:12.33px;line-height:17.26px;color:#383838;font-family:'Liberation Mono',monospace;">е возникновения вопросов, обращайтесь к Вашему финансисту от УНТЦ (см.htt</span>
<span style="left:536.6px;top:610.89px;font-size:12.33px;line-height:17.26px;color:#383838;font-family:'Liberation Mono',monospace;">p://www.stcu.int/projects/distribution/).</span>
<span style="left:-3.6px;top:655.05px;font-size:12.33px;line-height:17.26px;color:#383838;font-family:'Liberation Mono',monospace;">квартального финансового отчета (КФО)</span>
<span style="left:-11px;top:684.49px;font-size:12.33px;line-height:17.26px;color:#383838;font-family:'Liberation Mono',monospace;">квартальный финансовый отчет передается финансисту проекта.</span>
<span style="left:-11px;top:699.21px;font-size:12.33px;line-height:17.26px;color:#383838;font-family:'Liberation Mono',monospace;">полный комплект документов для КФО включает:</span>
<span style="left:-11px;top:728.65px;font-size:12.33px;line-height:17.26px;color:#383838;font-family:'Liberation Mono',monospace;">Check_Yourself</span>
<span style="left:-3.6px;top:625.61px;font-size:12.33px;line-height:17.26px;color:#383838;font-family:'Liberation Mono',monospace;">венный за проект </span>
<div style="left:122.2px;top:626.84px;width:192.4px;height:14.8px;background:rgba(100,203,0,0.99);"></div>
<span style="left:122.2px;top:625.61px;font-size:12.33px;line-height:17.26px;color:#e02010;font-family:'Liberation Mono',monospace;">Павлов Александр Сергеевич</span>
<span style="left:314.6px;top:625.61px;font-size:12.33px;line-height:17.26px;color:#383838;font-family:'Liberation Mono',monospace;">, (</span>
<div style="left:336.8px;top:626.84px;width:51.8px;height:14.8px;background:rgba(100,203,0,0.99);"></div>
<span style="left:336.8px;top:625.61px;font-size:12.33px;line-height:17.26px;color:#8a7a00;font-family:'Liberation Mono',monospace;">Паспорт</span>
<span style="left:388.6px;top:625.61px;font-size:12.33px;line-height:17.26px;color:#383838;font-family:'Liberation Mono',monospace;"> МА 1781211)</span>
<div style="left:0px;top:763.2px;width:1340px;height:1.2px;background:rgba(213,213,213,0.99);"></div>
<div style="left:41.2px;top:768px;width:1px;height:23.2px;background:rgba(216,216,216,0.99);"></div>
<div style="left:110px;top:768px;width:1px;height:23.2px;background:rgba(216,216,216,0.99);"></div>
<div style="left:188.8px;top:768px;width:1px;height:23.2px;background:rgba(216,216,216,0.99);"></div>
<div style="left:252.8px;top:768px;width:1px;height:23.2px;background:rgba(216,216,216,0.99);"></div>
<span style="left:-6.8px;top:772.64px;font-size:10.8px;line-height:15.12px;color:#333;letter-spacing:0.15px;transform:scaleY(1.12);">файлов</span>
<span style="left:50px;top:772.64px;font-size:10.8px;line-height:15.12px;color:#333;letter-spacing:0.19px;transform:scaleY(1.12);">Операции</span>
<span style="left:118.8px;top:772.64px;font-size:10.8px;line-height:15.12px;color:#1a6fd0;letter-spacing:-0.11px;transform:scaleY(1.12);">Только текст</span>
<span style="left:198px;top:772.64px;font-size:10.8px;line-height:15.12px;color:#333;letter-spacing:-0.25px;transform:scaleY(1.12);">Атрибуты</span>
</div></body></html>
